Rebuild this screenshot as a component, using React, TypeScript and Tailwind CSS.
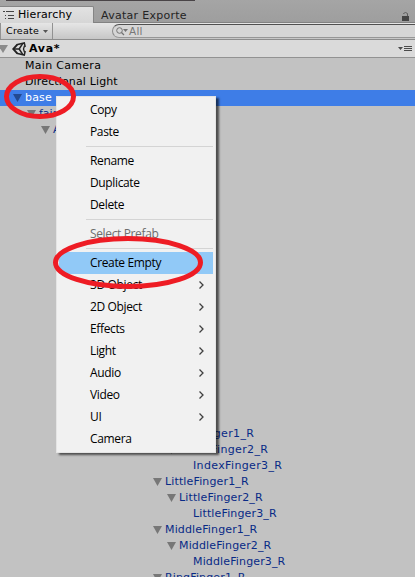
import type { ReactNode } from "react";

type Row = { name?: string; left?: string; open?: boolean; selected?: boolean };

const rows: Row[] = [
  { name: "Main Camera", left: "pl-[25px] tracking-[0.3px]" },
  { name: "Directional Light", left: "pl-[25px] tracking-[0.14px]" },
  { name: "base", left: "pl-[25px] tracking-[0.2px]", open: true, selected: true },
  { name: "fairy", left: "pl-[39px]", open: true },
  { name: "A", left: "pl-[53px]", open: true },
  ...Array.from({ length: 18 }, () => ({})),
  { name: "IndexFinger1_R", left: "pl-[165px] tracking-[0.36px]", open: true },
  { name: "IndexFinger2_R", left: "pl-[179px] tracking-[0.36px]", open: true },
  { name: "IndexFinger3_R", left: "pl-[193px] tracking-[0.36px]" },
  { name: "LittleFinger1_R", left: "pl-[165px] tracking-[0.14px]", open: true },
  { name: "LittleFinger2_R", left: "pl-[179px] tracking-[0.14px]", open: true },
  { name: "LittleFinger3_R", left: "pl-[193px] tracking-[0.14px]" },
  { name: "MiddleFinger1_R", left: "pl-[165px] tracking-[0.14px]", open: true },
  { name: "MiddleFinger2_R", left: "pl-[179px] tracking-[0.14px]", open: true },
  { name: "MiddleFinger3_R", left: "pl-[193px] tracking-[0.14px]" },
  { name: "RingFinger1_R", left: "pl-[165px] tracking-[0.14px]", open: true },
];

function Triangle({ color = "#777777" }: { color?: string }) {
  return (
    <svg width="9" height="8" viewBox="0 0 9 8" className="block shrink-0">
      <path d="M0 0H9L4.5 8Z" fill={color} />
    </svg>
  );
}

function TreeRow({ row, index }: { row: Row; index: number }) {
  const color = row.selected ? "text-white" : index < 2 ? "text-black" : "text-[#082a86]";
  return (
    <div className={`flex h-4 shrink-0 items-center whitespace-nowrap ${row.left ?? ""} ${row.selected ? "bg-[#3e7de7]" : ""} ${color}`}>
      {row.open && (
        <span className="-ml-3 mr-[3px]">
          <Triangle color={row.selected ? "#234a91" : "#777777"} />
        </span>
      )}
      <span className="leading-4">{row.name}</span>
    </div>
  );
}

function Item({ children, sub, active, disabled }: { children: ReactNode; sub?: boolean; active?: boolean; disabled?: boolean }) {
  return (
    <div className={`flex h-[22px] items-center justify-between pl-[31px] pr-[9px] ${active ? "bg-[#91c9f7]" : ""} ${disabled ? "text-[#6d6d6d]" : "text-black"}`}>
      <span>{children}</span>
      {sub && (
        <svg width="5" height="8" viewBox="0 0 5 8" fill="none" stroke="#404040" strokeWidth="1.3">
          <path d="M0.5 0.5L4 4L0.5 7.5" />
        </svg>
      )}
    </div>
  );
}

function Separator() {
  return (
    <div className="flex h-[7px] items-center pl-[27px]">
      <div className="h-px w-full bg-[#d4d4d4]" />
    </div>
  );
}

function ContextMenu() {
  return (
    <div className="absolute left-[56px] top-[96px] h-[357px] w-[160px] border border-[#e4e4e4] bg-[#f1f1f1] py-[2px] pl-[2px] pr-[2px] font-['Open_Sans','Noto_Sans',sans-serif] text-[12px] tracking-[-0.36px] shadow-[3px_2px_2px_rgba(0,0,0,0.6)]">
      <Item>Copy</Item>
      <Item>Paste</Item>
      <Separator />
      <Item>Rename</Item>
      <Item>Duplicate</Item>
      <Item>Delete</Item>
      <Separator />
      <Item disabled>Select Prefab</Item>
      <Separator />
      <Item active>Create Empty</Item>
      <Item sub>3D Object</Item>
      <Item sub>2D Object</Item>
      <Item sub>Effects</Item>
      <Item sub>Light</Item>
      <Item sub>Audio</Item>
      <Item sub>Video</Item>
      <Item sub>UI</Item>
      <Item>Camera</Item>
    </div>
  );
}

export default function App() {
  return (
    <div className="relative flex h-[577px] w-[415px] flex-col overflow-hidden bg-[#c2c2c2] font-['DejaVu_Sans',Verdana,sans-serif] text-[11px] leading-4">
      <header className="flex h-[23px] shrink-0 items-end border-b border-[#828282] bg-linear-to-b from-[#a5a5a5] to-[#9e9e9e]">
        <div className="flex h-full flex-1 flex-col">
          <div className="ml-[6px] h-px w-[189px] bg-[#494447]" />
          <div className="flex flex-1 items-end">
            <div className="-mb-px mt-auto flex h-[17px] w-[94px] items-center rounded-tr-[2px] border-r border-t border-[#858585] bg-linear-to-b from-[#e2e2e2] to-[#d6d6d6] pl-[3px]">
              <svg width="12" height="9" viewBox="0 0 12 9" className="mr-[3px] shrink-0 fill-[#444444]">
                <path d="M0 0h2v1H0zM3 0h8v1H3zM2 4h1v1H2zM5 4h6v1H5zM2 7h1v1H2zM5 7h6v1H5z" />
              </svg>
              <span className="tracking-[0.1px] text-black">Hierarchy</span>
            </div>
            <span className="-mb-[2px] h-4 pl-[7px] tracking-[0.28px] text-[#242424]">Avatar Exporte</span>
          </div>
        </div>
        <svg width="8" height="9" viewBox="0 0 8 9" className="mb-[1px] mr-[5px]">
          <path d="M0 4h7v5H0z" fill="#444" />
          <path d="M1.5 2V1.5Q3.5 -0.5 5.5 1.5V4" fill="none" stroke="#5c5c5c" />
        </svg>
      </header>

      <div className="flex h-[17px] shrink-0 border-b border-[#8d8d8d] bg-linear-to-b from-[#e6e6e6] to-[#c6c6c6]">
        <div className="flex w-[53px] shrink-0 items-center border-l border-r border-[#929292] pl-[5px] text-[9.5px] text-black">
          <span className="w-[37px] tracking-[0.25px]">Create</span>
          <svg width="5" height="3" viewBox="0 0 5 3"><path d="M0 0h5L2.5 3Z" fill="#555" /></svg>
        </div>
        <div className="ml-[59px] mt-px flex h-[14px] flex-1 items-center rounded-l-full border-b border-l border-t border-b-[#979797] border-l-[#8b8b8b] border-t-[#505050] bg-[#d6d6d6] pl-[3px] text-[10.5px] text-[#777777]">
          <svg width="13" height="9" viewBox="0 0 13 9" fill="none" stroke="#737373">
            <circle cx="3.5" cy="3.5" r="2.8" />
            <path d="M5.5 5.5L8 8" strokeWidth="1.3" />
            <path d="M7 2h5L9.5 5Z" fill="#737373" stroke="none" />
          </svg>
          <span className="tracking-[0.2px]">All</span>
        </div>
      </div>

      <div className="flex h-[17px] shrink-0 items-center bg-[#dadada]">
        <svg width="8" height="8" viewBox="0 0 8 8"><path d="M-2 0H8L3 8Z" fill="#8b8b8b" /></svg>
        <svg width="14" height="14" viewBox="0 0 14 14" className="ml-1 shrink-0" fill="none" stroke="#242424" strokeLinejoin="miter">
          <path d="M5.2 2.6L1.2 7L5.2 11.4" strokeWidth="1.9" />
          <path d="M4.5 2.8L12.3 0.9L13.2 5M4.5 11.2L12.3 13.1L13.2 9" strokeWidth="1.5" />
          <path d="M1.2 7H7.2L10.8 1.4M7.2 7L10.8 12.6" strokeWidth="1.5" />
          <path d="M12.4 4L11.5 7L12.4 10" strokeWidth="1.3" />
        </svg>
        <span className="ml-[3px] text-[11px] font-bold tracking-[0.7px] text-black">Ava*</span>
        <svg width="14" height="7" viewBox="0 0 14 7" className="ml-auto mr-[3px] shrink-0 fill-[#4b4b4b]">
          <path d="M0 2h5L2.5 5ZM6 1h8v1H6zM6 3h8v1H6zM6 5h8v1H6z" />
        </svg>
      </div>

      <main className="flex flex-1 flex-col border-t border-[#929292]">
        <div className="flex flex-col">
          {rows.map((row, index) => <TreeRow key={index} row={row} index={index} />)}
        </div>
      </main>

      <ContextMenu />

      <svg className="pointer-events-none absolute inset-0" width="415" height="577" fill="none" stroke="#ee1c24" strokeWidth="5">
        <ellipse cx="40" cy="96.5" rx="33.5" ry="20" />
        <ellipse cx="128" cy="262.5" rx="72.5" ry="24" />
      </svg>
    </div>
  );
}
